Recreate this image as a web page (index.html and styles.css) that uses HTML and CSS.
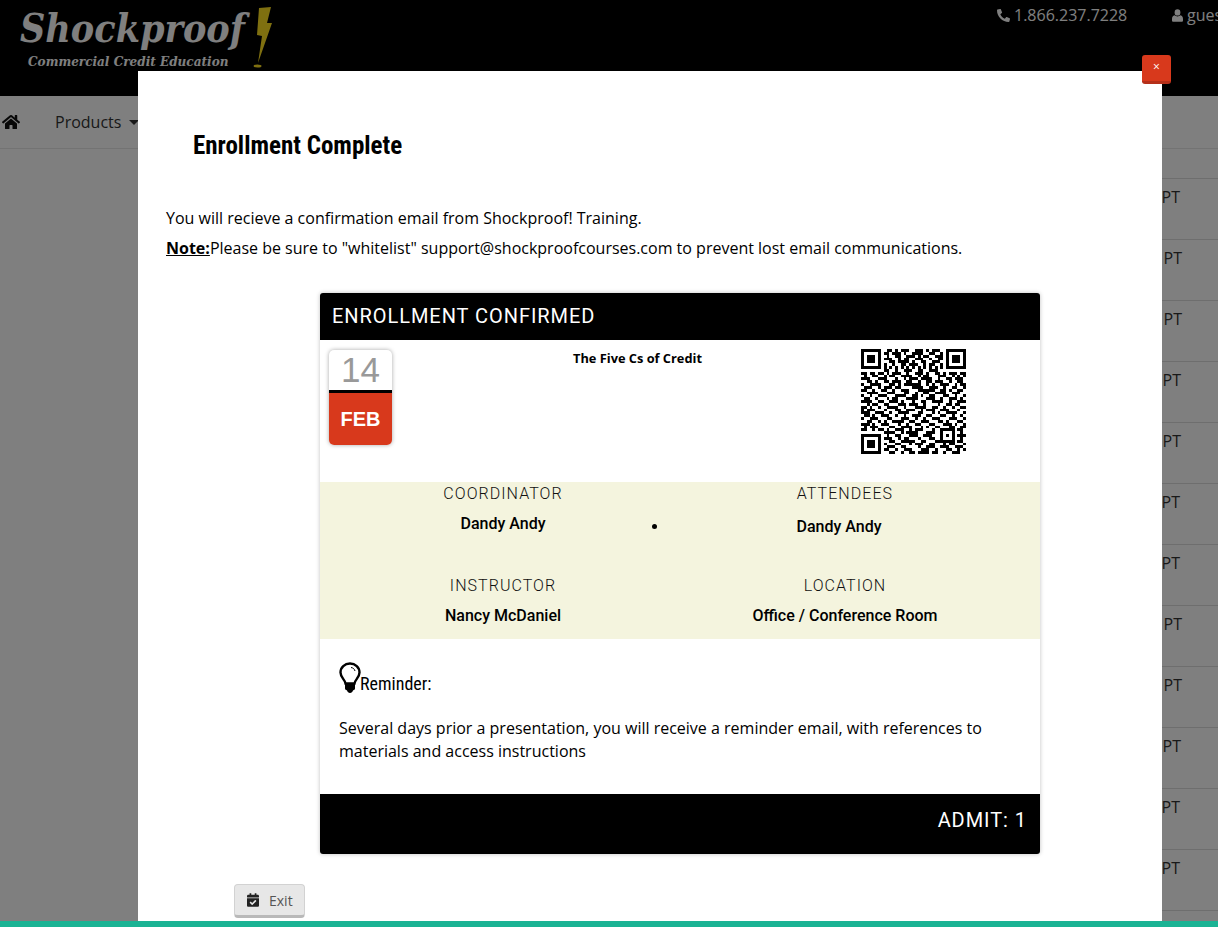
FILE: index.html
```html
<!DOCTYPE html>
<html lang="en">
<head>
<meta charset="utf-8">
<title>Enrollment Complete</title>
<link rel="stylesheet" href="styles.css">
</head>
<body>
<header class="topbar">
  <div class="logo">
    <div class="logo-name">Shockproof</div>
    <div class="logo-sub">Commercial Credit Education</div>
    <svg class="logo-bolt" viewBox="0 0 20 62" aria-hidden="true"><path d="M7 1L19 0L15 16H20L6 56L10 29L5 28Z" fill="#ffe020"/><ellipse cx="5.500" cy="59" rx="4" ry="1.500" fill="#ffe020"/></svg>
  </div>
  <div class="contact">
    <svg class="ico-phone" viewBox="0 0 512 512" aria-hidden="true"><path transform="matrix(-1 0 0 1 512 0)" d="M493.4 24.6l-104-24c-11.3-2.6-22.9 3.3-27.5 13.9l-48 112c-4.2 9.8-1.4 21.3 6.9 28l60.6 49.6c-36 76.7-98.9 140.5-177.2 177.2l-49.6-60.6c-6.8-8.3-18.2-11.1-28-6.9l-112 48C3.9 366.5-2 378.1.6 389.4l24 104C27.1 504.2 36.7 512 48 512c256.1 0 464-207.5 464-464 0-11.2-7.7-20.9-18.6-23.4z"/></svg>
    <span class="phone">1.866.237.7228</span>
    <svg class="ico-user" viewBox="0 0 448 512" aria-hidden="true"><ellipse cx="224" cy="130" rx="118" ry="130"/><path d="M100 250c30 30 75 45 124 45s94-15 124-45c60 10 100 70 100 150v60c0 30-22 52-52 52H52c-30 0-52-22-52-52v-60c0-80 40-140 100-150z"/></svg>
    <span class="user">guest</span>
  </div>
</header>
<nav class="navbar">
  <svg class="ico-home" viewBox="0 0 576 512" aria-hidden="true"><path d="M280.37 148.26L96 300.11V464a16 16 0 0 0 16 16l112.06-.29a16 16 0 0 0 15.92-16V368a16 16 0 0 1 16-16h64a16 16 0 0 1 16 16v95.64a16 16 0 0 0 16 16.05L464 480a16 16 0 0 0 16-16V300L295.67 148.26a12.19 12.19 0 0 0-15.3 0zM571.6 251.47L488 182.56V44.05a12 12 0 0 0-12-12h-56a12 12 0 0 0-12 12v72.61L318.47 43a48 48 0 0 0-61 0L4.34 251.47a12 12 0 0 0-1.6 16.9l25.5 31A12 12 0 0 0 45.15 301l235.22-193.74a12.19 12.19 0 0 1 15.3 0L530.9 301a12 12 0 0 0 16.9-1.6l25.5-31a12 12 0 0 0-1.7-16.93z"/></svg>
  <span class="nav-item">Products<span class="caret"></span></span>
</nav>
<main class="sessions">
  <div class="row">PT</div>
  <div class="row wide">PT</div>
  <div class="row wide">PT</div>
  <div class="row mid">PT</div>
  <div class="row mid">PT</div>
  <div class="row">PT</div>
  <div class="row">PT</div>
  <div class="row wide">PT</div>
  <div class="row wide">PT</div>
  <div class="row mid">PT</div>
  <div class="row">PT</div>
  <div class="row">PT</div>
</main>
<div class="backdrop"></div>
<section class="modal">
  <button class="close" type="button">×</button>
  <h1 class="modal-title">Enrollment Complete</h1>
  <p class="intro">You will recieve a confirmation email from Shockproof! Training.<br><strong class="note">Note:</strong>Please be sure to "whitelist" support@shockproofcourses.com to prevent lost email communications.</p>
  <article class="ticket">
    <div class="ticket-head">ENROLLMENT CONFIRMED</div>
    <div class="ticket-main">
      <div class="cal">
        <div class="cal-day">14</div>
        <div class="cal-month">FEB</div>
      </div>
      <div class="course">The Five Cs of Credit</div>
      <svg class="qr" viewBox="0 0 37 37" shape-rendering="crispEdges" aria-hidden="true"><g transform="translate(0 .5)" stroke="#000" fill="none"><path d="M0 0h7M9 0h2M12 0h1M14 0h3M19 0h3M23 0h1M25 0h3M30 0h7
M0 1h1M6 1h1M8 1h2M11 1h3M15 1h1M18 1h4M24 1h2M28 1h1M30 1h1M36 1h1
M0 2h1M2 2h3M6 2h1M9 2h1M12 2h2M16 2h3M20 2h1M22 2h2M26 2h3M30 2h1M32 2h3M36 2h1
M0 3h1M2 3h3M6 3h1M8 3h3M13 3h1M15 3h2M19 3h3M24 3h1M27 3h2M30 3h1M32 3h3M36 3h1
M0 4h1M2 4h3M6 4h1M10 4h2M13 4h4M18 4h1M21 4h2M25 4h3M30 4h1M32 4h3M36 4h1
M0 5h1M6 5h1M8 5h1M11 5h1M14 5h2M17 5h3M22 5h1M24 5h2M28 5h1M30 5h1M36 5h1
M0 6h7M8 6h1M10 6h1M12 6h1M14 6h1M16 6h1M18 6h1M20 6h1M22 6h1M24 6h1M26 6h1M28 6h1M30 6h7
M8 7h2M12 7h1M15 7h3M20 7h2M24 7h3
M0 8h2M3 8h2M6 8h2M9 8h1M11 8h3M16 8h1M19 8h3M23 8h1M26 8h2M29 8h1M31 8h3M35 8h2
M1 9h1M4 9h2M8 9h1M10 9h2M14 9h4M20 9h1M22 9h2M27 9h3M32 9h1M34 9h1M36 9h1
M0 10h3M6 10h3M12 10h1M15 10h1M17 10h3M21 10h4M27 10h1M30 10h2M33 10h3
M2 11h2M5 11h1M8 11h2M11 11h3M16 11h2M20 11h1M23 11h2M26 11h3M31 11h1M34 11h2
M0 12h1M3 12h4M10 12h2M13 12h1M15 12h6M23 12h1M25 12h1M28 12h3M33 12h1M35 12h2
M1 13h3M6 13h1M8 13h3M12 13h2M18 13h4M24 13h3M29 13h1M32 13h2M36 13h1
M0 14h2M4 14h1M7 14h2M11 14h1M14 14h3M20 14h6M28 14h2M31 14h1M34 14h2
M2 15h4M9 15h3M15 15h2M19 15h1M22 15h2M26 15h4M32 15h3
M0 16h1M3 16h1M6 16h3M12 16h4M18 16h2M21 16h1M24 16h2M29 16h2M33 16h1M36 16h1
M1 17h2M5 17h1M9 17h1M11 17h2M16 17h4M23 17h3M28 17h1M31 17h3M35 17h1
M0 18h4M6 18h2M10 18h3M14 18h1M18 18h1M21 18h2M25 18h4M31 18h1M34 18h3
M2 19h1M4 19h2M8 19h2M13 19h3M17 19h3M22 19h1M27 19h1M30 19h2M33 19h2
M0 20h2M3 20h1M6 20h1M9 20h4M15 20h1M19 20h4M25 20h2M29 20h1M32 20h1M35 20h2
M0 21h1M2 21h3M8 21h1M12 21h2M16 21h3M21 21h1M23 21h3M28 21h3M34 21h1
M0 22h3M5 22h3M10 22h1M13 22h4M20 22h2M25 22h1M27 22h1M30 22h4M36 22h1
M1 23h2M4 23h1M7 23h3M12 23h1M15 23h1M18 23h3M23 23h2M28 23h2M32 23h1M35 23h1
M0 24h1M3 24h3M9 24h2M14 24h3M19 24h1M22 24h1M25 24h3M31 24h3M36 24h1
M2 25h2M6 25h1M8 25h1M11 25h4M17 25h2M21 25h3M27 25h2M30 25h1M34 25h2
M0 26h3M4 26h1M7 26h3M13 26h1M16 26h1M19 26h2M24 26h2M29 26h3M33 26h1M36 26h1
M1 27h1M3 27h3M10 27h2M14 27h4M21 27h1M23 27h1M26 27h2M31 27h2M35 27h2
M0 28h2M4 28h1M6 28h2M9 28h1M12 28h3M17 28h1M19 28h3M25 28h1M28 28h5M34 28h2
M8 29h4M14 29h1M16 29h4M23 29h3M28 29h1M32 29h1M35 29h1
M0 30h7M9 30h1M12 30h2M17 30h3M22 30h3M28 30h1M30 30h1M32 30h1M34 30h3
M0 31h1M6 31h1M8 31h3M13 31h1M15 31h2M20 31h1M24 31h2M28 31h1M32 31h1M35 31h1
M0 32h1M2 32h3M6 32h1M10 32h2M14 32h5M21 32h2M26 32h7M34 32h2
M0 33h1M2 33h3M6 33h1M8 33h1M12 33h2M17 33h1M19 33h3M24 33h2M29 33h1M31 33h2M36 33h1
M0 34h1M2 34h3M6 34h1M9 34h3M14 34h2M20 34h1M23 34h3M28 34h3M33 34h3
M0 35h1M6 35h1M8 35h2M12 35h1M15 35h3M21 35h3M26 35h1M30 35h2M34 35h1M36 35h1
M0 36h7M10 36h2M14 36h1M17 36h2M20 36h4M25 36h2M29 36h1M32 36h3"/></g></svg>
    </div>
    <div class="people">
      <div class="person">
        <div class="label">COORDINATOR</div>
        <div class="value">Dandy Andy</div>
      </div>
      <div class="person">
        <div class="label">ATTENDEES</div>
        <ul class="attendees"><li class="value">Dandy Andy</li></ul>
      </div>
      <div class="person">
        <div class="label">INSTRUCTOR</div>
        <div class="value">Nancy McDaniel</div>
      </div>
      <div class="person">
        <div class="label">LOCATION</div>
        <div class="value">Office / Conference Room</div>
      </div>
    </div>
    <div class="reminder">
      <div class="reminder-head">
        <svg class="ico-bulb" viewBox="0 0 22 32" aria-hidden="true"><path d="M6.5 21.5C6 17.5 1.5 15.5 1.5 10.5 1.5 5.200 5.700 1.500 11 1.500s9.500 3.700 9.500 9c0 5-4.500 7-5 11z" fill="none" stroke="#000" stroke-width="2.400"/><path d="M12 5.500c2 .2 3.500 1.500 4 3.500" fill="none" stroke="#000" stroke-width="1"/><path d="M6 22h10v4.500c0 1-1 1.500-2 2-.5 1.500-1.500 2.500-3 2.500s-2.500-1-3-2.500c-1-.5-2-1-2-2z"/></svg>
        <span>Reminder:</span>
      </div>
      <p class="reminder-text">Several days prior a presentation, you will receive a reminder email, with references to materials and access instructions</p>
    </div>
    <div class="ticket-foot">ADMIT: 1</div>
  </article>
  <button class="exit" type="button">
    <svg class="ico-cal" viewBox="0 0 448 512" aria-hidden="true"><path d="M436 160H12c-6.600 0-12-5.400-12-12v-36c0-26.500 21.500-48 48-48h48V12c0-6.600 5.400-12 12-12h40c6.600 0 12 5.400 12 12v52h128V12c0-6.600 5.400-12 12-12h40c6.600 0 12 5.400 12 12v52h48c26.500 0 48 21.500 48 48v36c0 6.600-5.400 12-12 12zM12 192h424c6.600 0 12 5.400 12 12v260c0 26.500-21.500 48-48 48H48c-26.500 0-48-21.500-48-48V204c0-6.600 5.400-12 12-12zm333.300 95.900l-28.200-28.400c-4.700-4.700-12.300-4.800-17-.1L194 364.300l-46.100-46.500c-4.700-4.700-12.300-4.800-17-.1l-28.400 28.200c-4.700 4.700-4.800 12.300-.1 17l82.600 83.300c4.700 4.700 12.300 4.800 17 .1l143.200-142c4.700-4.700 4.800-12.300.1-17z"/></svg>
    <span>Exit</span>
  </button>
</section>
<div class="footer-bar"></div>
</body>
</html>
```
FILE: styles.css
```css
* { box-sizing: border-box; }
html, body { height: 100%; }
body {
  margin: 0;
  overflow: hidden;
  background: #fff;
  color: #000;
  font-family: "Open Sans", sans-serif;
  font-size: 16px;
}
.topbar {
  position: relative;
  display: flex;
  justify-content: space-between;
  height: 96px;
  background: #000;
  color: #fff;
}
.logo {
  position: relative;
  width: 280px;
  padding: 4px 0 0 20px;
  font-family: "DejaVu Serif Condensed", "DejaVu Serif", serif;
  font-style: italic;
  font-weight: 700;
  color: #fff;
}
.logo-name { font-size: 39px; line-height: 48px; white-space: nowrap; }
.logo-sub { margin: 1px 0 0 8px; font-size: 13.400px; line-height: 17px; white-space: nowrap; }
.logo-bolt { position: absolute; left: 252px; top: 7px; width: 20px; height: 62px; }
.contact {
  display: flex;
  align-items: flex-start;
  width: 221px;
  padding-top: 4px;
  white-space: nowrap;
  overflow: hidden;
  line-height: 22px;
}
.contact svg { fill: #fff; }
.ico-phone { width: 13px; height: 13px; margin: 5px 4px 0 0; flex: none; }
.phone { width: 113px; flex: none; }
.ico-user { width: 11px; height: 13px; margin: 5px 4px 0 45px; flex: none; }
.navbar {
  display: flex;
  align-items: center;
  height: 53px;
  padding: 0 0 0 2px;
  border-bottom: 1px solid #e7e7e7;
  background: #fff;
}
.ico-home { width: 18px; height: 16px; flex: none; fill: #111; }
.nav-item { margin-left: 35px; color: #333; display: flex; align-items: center; }
.caret {
  width: 0;
  height: 0;
  margin-left: 8px;
  border: 5px solid transparent;
  border-top-color: #333;
  border-bottom: 0;
}
.sessions { padding: 29px 0 0 150px; }
.row {
  height: 61px;
  padding: 7px 38px 0 0;
  border-top: 1px solid #ddd;
  text-align: right;
  color: #333;
  line-height: 22px;
}
.row.wide { padding-right: 36px; }
.row.mid { padding-right: 37px; }
.row:last-child { border-bottom: 1px solid #ddd; height: 62px; }
.backdrop {
  position: fixed;
  inset: 0;
  background: rgba(0, 0, 0, .5);
}
.modal {
  position: fixed;
  left: 138px;
  top: 71px;
  width: 1024px;
  bottom: 0;
  padding: 0 0 0 28px;
  background: #fff;
}
.close {
  position: absolute;
  right: -9px;
  top: -16px;
  width: 29px;
  height: 29px;
  padding: 0 0 2px;
  border: 0;
  border-bottom: 3px solid #b5301a;
  border-radius: 3px;
  background: #d8391c;
  color: #fff;
  font: 12px/1 "Open Sans", sans-serif;
}
.modal-title {
  margin: 0;
  padding: 60px 0 0 27px;
  font-family: Roboto, sans-serif;
  font-stretch: 75%;
  font-size: 25px;
  line-height: 30px;
  font-weight: 700;
}
.intro { margin: 42px 0 0; line-height: 30px; }
.note { text-decoration: underline; }
.ticket {
  width: 720px;
  margin: 30px 0 0 154px;
  border-radius: 3px;
  box-shadow: 0 0 4px rgba(0, 0, 0, .25);
  overflow: hidden;
  background: #fff;
}
.ticket-head {
  height: 47px;
  padding: 0 12px;
  background: #000;
  color: #fff;
  font-family: Roboto, sans-serif;
  font-weight: 400;
  font-size: 20px;
  line-height: 47px;
  letter-spacing: .950px;
}
.ticket-main {
  display: grid;
  grid-template-columns: 63px 1fr 105px;
  height: 142px;
  padding: 10px 74px 0 9px;
}
.cal { height: 95px; border-radius: 5px; overflow: hidden; box-shadow: 0 0 4px rgba(0, 0, 0, .35); font-family: "Liberation Sans", sans-serif; text-align: center; }
.cal-day { height: 43px; border-bottom: 3px solid #000; color: #999; font-size: 35px; line-height: 39px; }
.cal-month { height: 52px; background: #d8391c; color: #fff; font-weight: 700; font-size: 20px; line-height: 52px; }
.course { padding: 0 0 0 22px; text-align: center; font-size: 12.800px; line-height: 16px; font-weight: 700; }
.qr { width: 105px; height: 105px; margin-top: -1px; }
.people {
  display: grid;
  grid-template-columns: 366px 318px;
  height: 157px;
  padding-top: 1px;
  background: #f4f4de;
  font-family: Roboto, sans-serif;
  text-align: center;
}
.person { height: 92px; }
.label { font-weight: 300; letter-spacing: 1.050px; line-height: 22px; color: #111; }
.value { font-weight: 500; line-height: 22px; margin-top: 8px; }
.attendees { margin: 0 -7px 0 -17px; padding: 0; }
.attendees .value { margin: 11px 2px 0 0; }
.reminder { height: 155px; padding: 23px 20px 0 19px; }
.reminder-head { display: flex; align-items: flex-end; height: 32px; font-family: Roboto, sans-serif; font-stretch: 75%; font-size: 18px; line-height: 20px; }
.ico-bulb { width: 22px; height: 32px; flex: none; margin-right: -1px; }
.reminder-text { margin: 23px 0 0; line-height: 23px; }
.ticket-foot {
  height: 60px;
  padding: 0 13px;
  background: #000;
  color: #fff;
  text-align: right;
  font-family: Roboto, sans-serif;
  font-weight: 400;
  font-size: 20px;
  line-height: 52px;
  letter-spacing: .950px;
}
.exit {
  display: flex;
  align-items: center;
  gap: 10px;
  width: 71px;
  height: 34px;
  margin: 30px 0 0 68px;
  padding: 0 0 0 12px;
  border: 1px solid #d2d2d2;
  border-bottom: 3px solid #b9b9b9;
  border-radius: 4px;
  background: #e7e7e7;
  color: #555;
  font: 14px "Open Sans", sans-serif;
}
.ico-cal { width: 12px; height: 14px; flex: none; fill: #222; }
.footer-bar {
  position: fixed;
  left: 0;
  right: 0;
  bottom: 0;
  height: 6px;
  background: #1ab394;
}
```
